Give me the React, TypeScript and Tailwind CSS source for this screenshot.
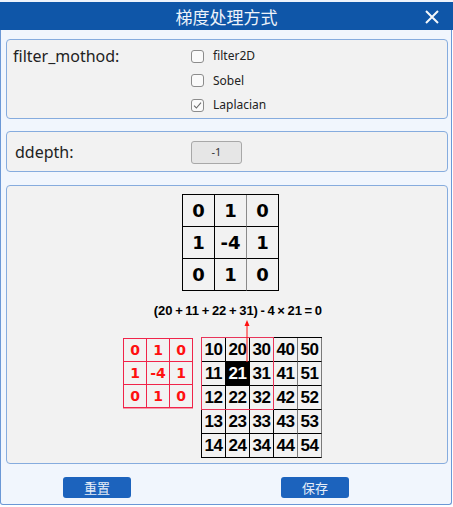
import React from "react";

const kernel = [
  ["0", "1", "0"],
  ["1", "-4", "1"],
  ["0", "1", "0"],
];

const image = [
  ["10", "20", "30", "40", "50"],
  ["11", "21", "31", "41", "51"],
  ["12", "22", "32", "42", "52"],
  ["13", "23", "33", "43", "53"],
  ["14", "24", "34", "44", "54"],
];

function CheckBox({ label, checked }: { label: string; checked?: boolean }) {
  return (
    <div className="flex h-[24.5px] items-center">
      <div className="flex h-[13px] w-[13px] items-center justify-center rounded-[3px] border border-[#8c8c8c] bg-[#fafafa]">
        {checked && (
          <svg width="11" height="11" viewBox="0 0 11 11">
            <path d="M2 5.6 L4.4 8 L9 2.6" fill="none" stroke="#6a6a6a" strokeWidth="1.1" />
          </svg>
        )}
      </div>
      <span className="ml-[9px] text-[12px] leading-none text-[#222]">{label}</span>
    </div>
  );
}

export default function App() {
  return (
    <div className="w-[453px] bg-white" style={{ fontFamily: '"Noto Sans", "Noto Sans CJK SC", sans-serif' }}>
      {/* title bar */}
      <div className="bg-[#eef3fb] pt-[2px]">
        <div className="relative flex h-[28px] items-center justify-center bg-[#0f56a8]">
          <span className="text-[17px] leading-none text-[#eef3fa]" style={{ fontFamily: '"Noto Sans CJK SC", sans-serif' }}>
            梯度处理方式
          </span>
          <svg className="absolute right-[14px] top-[8px]" width="14" height="14" viewBox="0 0 14 14">
            <path d="M1 1 L13 13 M13 1 L1 13" stroke="#f4f7fb" strokeWidth="2" />
          </svg>
        </div>
      </div>

      <div className="flex w-[452px] flex-col rounded-b-[3px] border-x border-b border-[#6b98d6] bg-[#f1f6fd] pb-[6px]">
        {/* filter_mothod */}
        <div className="ml-[5px] mt-[9px] flex h-[80px] w-[442px] rounded-[4px] border border-[#86acde] bg-[#f2f2f2] pl-[6px] pt-[4px]">
          <div className="w-[178px] pt-[1px] text-[16px] leading-[22px] text-[#222]">filter_mothod:</div>
          <div className="flex flex-col">
            <CheckBox label="filter2D" />
            <CheckBox label="Sobel" />
            <CheckBox label="Laplacian" checked />
          </div>
        </div>

        {/* ddepth */}
        <div className="ml-[5px] mt-[12px] flex h-[41px] w-[442px] items-center rounded-[4px] border border-[#86acde] bg-[#f2f2f2] pl-[8px]">
          <div className="w-[176px] text-[16px] leading-none text-[#222]">ddepth:</div>
          <div className="mt-[2px] flex h-[23px] w-[51px] items-center justify-center rounded-[3px] border border-[#a8a8a8] bg-[#e6e6e6] text-[11px] text-[#333]">
            -1
          </div>
        </div>

        {/* figure */}
        <div className="ml-[5px] mt-[13px] h-[279px] w-[442px] rounded-[4px] border border-[#86acde] bg-[#f2f2f2] pt-[8px]">
          <div className="ml-[115px] flex w-[200px] flex-col">
            <div
              className="ml-[60px] grid w-[97px] grid-cols-3 border-l border-t border-black"
              style={{ fontFamily: '"DejaVu Sans", sans-serif' }}
            >
              {kernel.flat().map((v, i) => (
                <div
                  key={i}
                  className={
                    "flex h-[32px] items-center justify-center border-b border-r text-[18px] font-bold leading-none text-black " +
                    (i % 3 === 1 ? "border-r-[#8a8a8a] border-b-black" : "border-black")
                  }
                >
                  {v}
                </div>
              ))}
            </div>

            <div
              className="mt-[12px] whitespace-pre text-right text-[13px] font-bold leading-[16px] text-black"
              style={{ fontFamily: '"Liberation Sans", sans-serif' }}
            >
              {"(20\u2009+\u200911\u2009+\u200922\u2009+\u200931)\u2009-\u20094\u2009×\u200921\u2009=\u20090"}
            </div>

            <div className="mt-[18px] flex items-start">
              <div
                className="ml-[1px] mt-[1px] grid w-[70px] grid-cols-3 border-l border-t border-[#f0244a] shadow-[0_1px_0_#f59aaa]"
                style={{ fontFamily: '"DejaVu Sans", sans-serif' }}
              >
                {kernel.flat().map((v, i) => (
                  <div
                    key={i}
                    className="flex h-[23px] items-center justify-center border-b border-r border-[#f0244a] text-[14px] font-bold leading-none text-[#ff1010]"
                  >
                    {v}
                  </div>
                ))}
              </div>

              <div className="relative ml-[8px]">
                <div
                  className="grid w-[121px] grid-cols-5 border-l border-t border-black"
                  style={{ fontFamily: '"Liberation Sans", sans-serif' }}
                >
                  {image.flat().map((v, i) => (
                    <div
                      key={i}
                      className={
                        "flex h-[24px] items-center justify-center border-b border-r text-[17px] font-bold leading-none tracking-[-0.5px] " +
                        (v === "21" ? "bg-black text-white " : "text-black ") +
                        (i % 5 === 3 || i % 5 === 4 ? "border-r-[#7a7a7a] border-b-black" : "border-black")
                      }
                    >
                      {v}
                    </div>
                  ))}
                </div>
                {/* highlighted 3x3 window */}
                <div className="pointer-events-none absolute left-0 top-0 h-[73px] w-[73px] border border-[#e8355a]" />
                {/* arrow to the centre pixel */}
                <svg className="absolute left-[42px] top-[-18px]" width="8" height="44" viewBox="0 0 8 44">
                  <path d="M4 3 L4 43" stroke="#ff1010" strokeWidth="1" />
                  <path d="M1.5 7 L4 1 L6.5 7 Z" fill="#ff1010" />
                </svg>
              </div>
            </div>
          </div>
        </div>

        {/* buttons */}
        <div className="mt-[13px] flex" style={{ fontFamily: '"Noto Sans CJK SC", sans-serif' }}>
          <div className="ml-[62px] flex h-[21px] w-[68px] items-center justify-center rounded-[3px] bg-[#1c63bd] text-[13px] text-[#e6edf7]">
            重置
          </div>
          <div className="ml-[150px] flex h-[21px] w-[68px] items-center justify-center rounded-[3px] bg-[#1c63bd] text-[13px] text-[#e6edf7]">
            保存
          </div>
        </div>
      </div>
    </div>
  );
}
